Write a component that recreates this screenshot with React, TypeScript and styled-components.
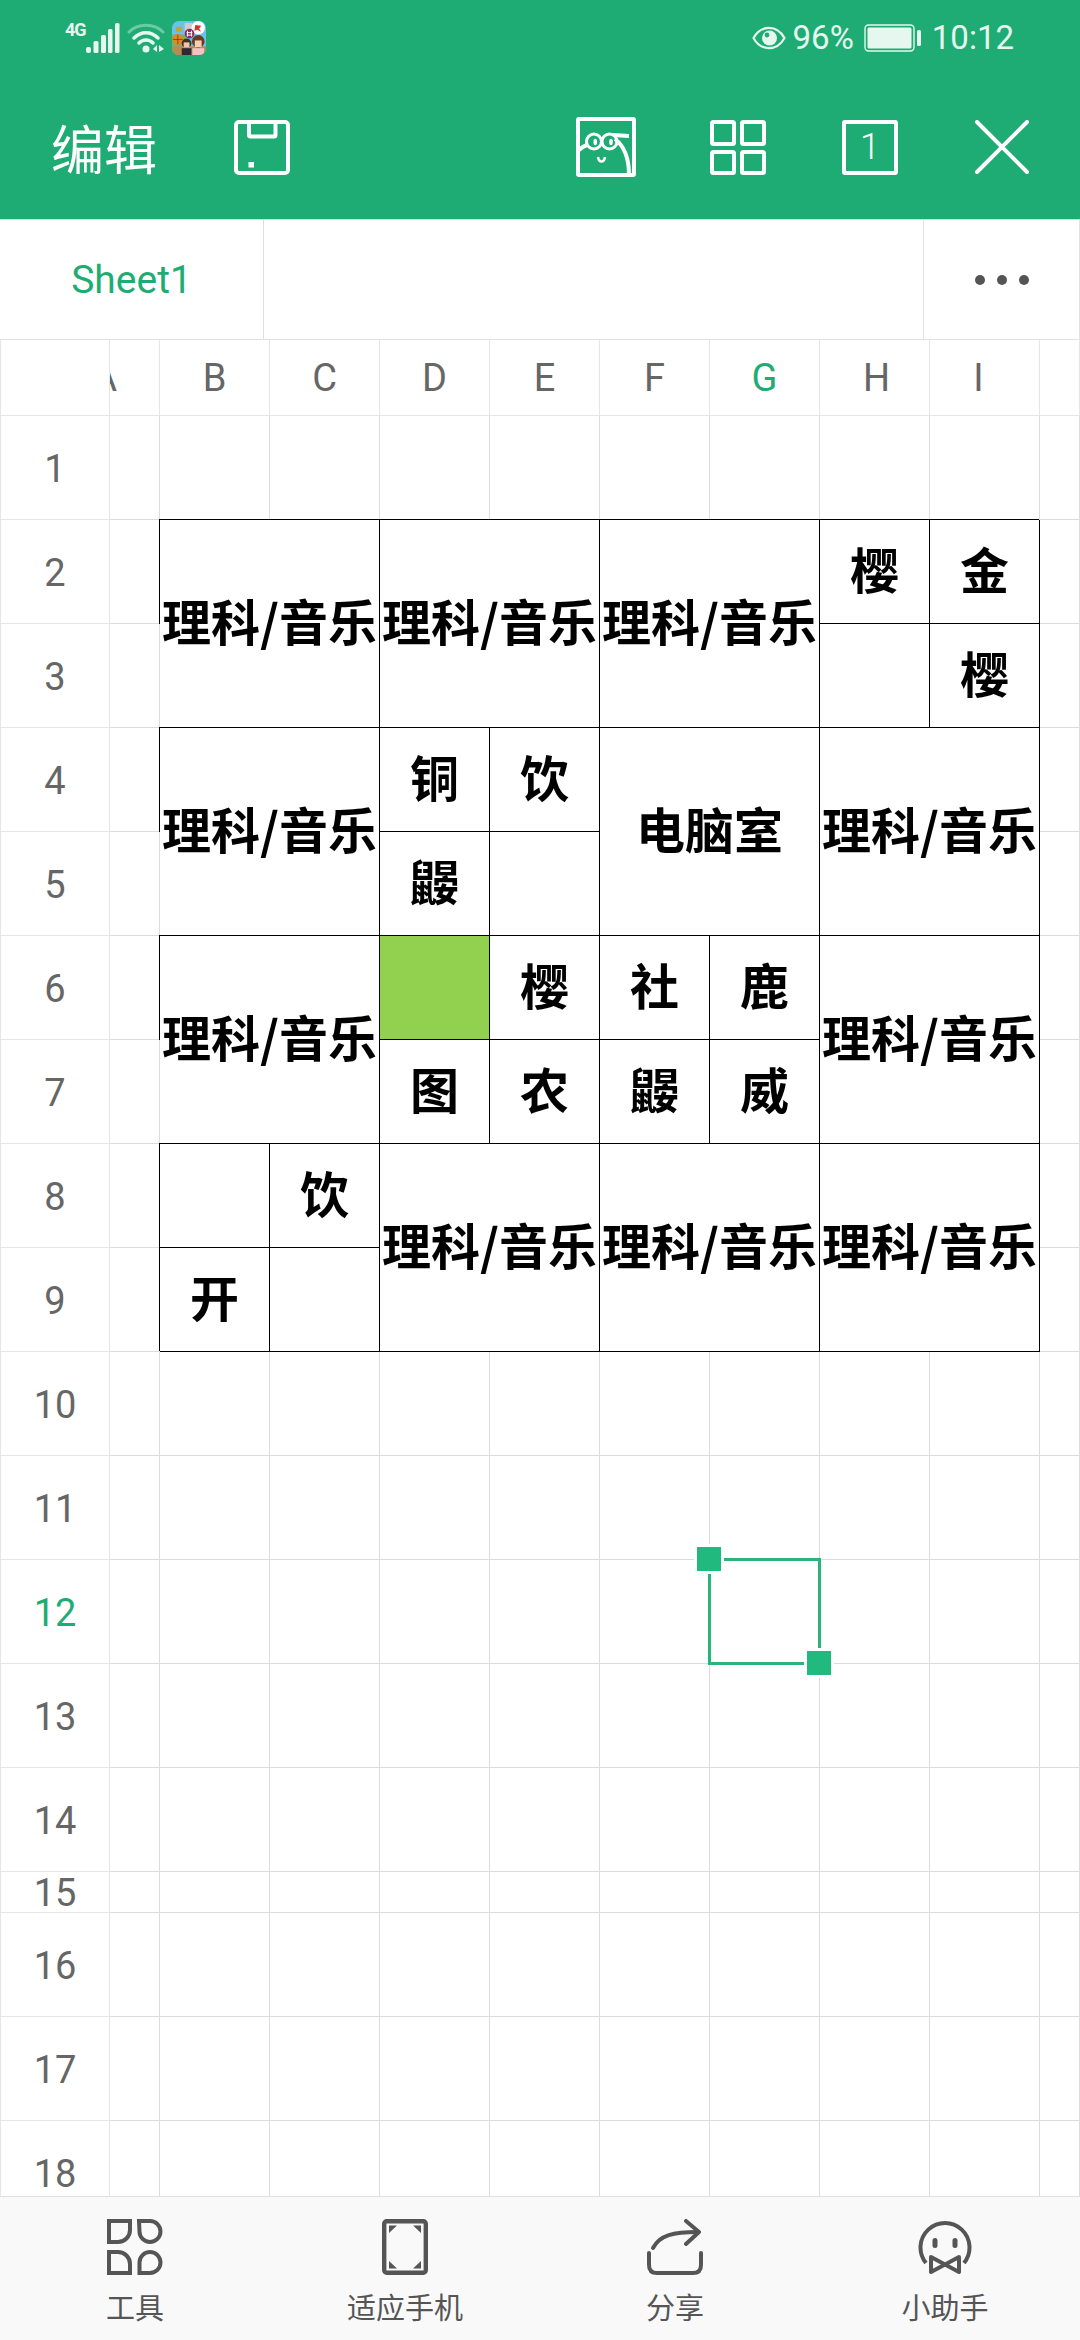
import React from "react";
import styled, { createGlobalStyle } from "styled-components";

const GREEN = "#1fac74";
const SANS = `Roboto, "Noto Sans CJK SC", sans-serif`;
const CJK = `"Noto Sans CJK SC", "Noto Sans", sans-serif`;

const COLS = ["A", "B", "C", "D", "E", "F", "G", "H", "I", ""];
const ROW_COUNT = 18;
const SUBJECT = "理科/音乐";

type Merged = { col: number; row: number; cs?: number; rs?: number; text?: string; fill?: boolean };

// col 1 = A, row 1 = first sheet row
const TABLE: Merged[] = [
  { col: 2, row: 2, cs: 2, rs: 2, text: SUBJECT },
  { col: 4, row: 2, cs: 2, rs: 2, text: SUBJECT },
  { col: 6, row: 2, cs: 2, rs: 2, text: SUBJECT },
  { col: 8, row: 2, text: "樱" },
  { col: 9, row: 2, text: "金" },
  { col: 8, row: 3 },
  { col: 9, row: 3, text: "樱" },
  { col: 2, row: 4, cs: 2, rs: 2, text: SUBJECT },
  { col: 4, row: 4, text: "铜" },
  { col: 5, row: 4, text: "饮" },
  { col: 6, row: 4, cs: 2, rs: 2, text: "电脑室" },
  { col: 8, row: 4, cs: 2, rs: 2, text: SUBJECT },
  { col: 4, row: 5, text: "鼹" },
  { col: 5, row: 5 },
  { col: 2, row: 6, cs: 2, rs: 2, text: SUBJECT },
  { col: 4, row: 6, fill: true },
  { col: 5, row: 6, text: "樱" },
  { col: 6, row: 6, text: "社" },
  { col: 7, row: 6, text: "鹿" },
  { col: 8, row: 6, cs: 2, rs: 2, text: SUBJECT },
  { col: 4, row: 7, text: "图" },
  { col: 5, row: 7, text: "农" },
  { col: 6, row: 7, text: "鼹" },
  { col: 7, row: 7, text: "威" },
  { col: 2, row: 8 },
  { col: 3, row: 8, text: "饮" },
  { col: 4, row: 8, cs: 2, rs: 2, text: SUBJECT },
  { col: 6, row: 8, cs: 2, rs: 2, text: SUBJECT },
  { col: 8, row: 8, cs: 2, rs: 2, text: SUBJECT },
  { col: 2, row: 9, text: "开" },
  { col: 3, row: 9 },
];

function findStart(col: number, row: number) {
  return TABLE.find((t) => t.col === col && t.row === row);
}

function isCovered(col: number, row: number) {
  return TABLE.some(
    (t) => col >= t.col && col < t.col + (t.cs ?? 1) && row >= t.row && row < t.row + (t.rs ?? 1)
  );
}

const SignalIcon = () => (
  <svg width="35" height="30" viewBox="0 0 35 30" fill="currentColor">
    <rect x="1" y="24" width="5" height="6" rx="2" />
    <rect x="8.5" y="18" width="5" height="12" rx="1.5" />
    <rect x="16" y="12" width="5" height="18" rx="1.5" />
    <rect x="23" y="6" width="4.5" height="24" rx="1.5" />
    <rect x="30" y="0" width="4.5" height="30" rx="1.5" />
  </svg>
);

const WifiIcon = () => (
  <svg width="38" height="30" viewBox="0 0 38 30" fill="none" stroke="currentColor" strokeLinecap="round">
    <path d="M2 9 C11 0 27 0 36 9" strokeWidth="3" opacity="0.4" />
    <path d="M7 15 C14 8 24 8 31 15" strokeWidth="3.5" />
    <path d="M12 20 C16 16 22 16 26 20" strokeWidth="3.5" />
    <circle cx="19" cy="26" r="3.5" fill="currentColor" stroke="none" />
    <path d="M30 22 V29 L26 26 Z M32 22 V29 L37 26 Z" fill="currentColor" stroke="none" />
  </svg>
);

const GameIcon = () => (
  <svg width="34" height="34" viewBox="0 0 35 35">
    <clipPath id="game-clip">
      <rect width="35" height="35" rx="7" />
    </clipPath>
    <g clipPath="url(#game-clip)">
      <rect width="35" height="35" fill="#6cc0ea" />
      <rect y="14" width="14" height="12" fill="#6db56a" />
      <rect y="26" width="35" height="9" fill="#b98a52" />
      <rect x="13" y="2" width="8" height="12" fill="#c9ced0" />
      <rect x="4" y="6" width="6" height="5" fill="#b9a83a" />
      <circle cx="27" cy="7" r="7" fill="#fff" />
      <path d="M24 4 L30 5 L28 8 L30 11 L26 9 L23 10 Z" fill="#d8322a" />
      <circle cx="6" cy="19" r="6" fill="#d98a2b" />
      <path d="M1 19 H11 M6 14 V24" stroke="#8a4b12" strokeWidth="1" />
      <circle cx="18" cy="13" r="5" fill="#8f2a55" />
      <path d="M16 10 V16 M20 10 V16 M15 12 H21 M15 14.5 H21" stroke="#fff" strokeWidth="1" />
      <rect x="10" y="28" width="10" height="7" fill="#2b2b33" />
      <circle cx="15" cy="23" r="5" fill="#4b2a22" />
      <rect x="12" y="22" width="6" height="5.500" fill="#f3c6a2" />
      <rect x="21" y="28" width="12" height="7" fill="#f6c0c4" />
      <circle cx="27" cy="21" r="6.500" fill="#6b3a22" />
      <rect x="23.500" y="20" width="7" height="7" fill="#f7cfae" />
    </g>
  </svg>
);

const EyeIcon = () => (
  <svg width="34" height="26" viewBox="0 0 34 26" fill="none" stroke="currentColor">
    <path d="M1.5 13 C9 -0.5 25 -0.5 32.5 13 C25 26.5 9 26.5 1.5 13 Z" strokeWidth="2.2" />
    <circle cx="17.5" cy="13" r="7.5" fill="currentColor" stroke="none" />
    <circle cx="15" cy="10" r="2.4" fill={GREEN} stroke="none" />
  </svg>
);

const BatteryIcon = () => (
  <svg width="57" height="28" viewBox="0 0 57 28" fill="currentColor">
    <rect x="1" y="1" width="49" height="26" rx="3.5" fill="none" stroke="currentColor" strokeWidth="1.4" />
    <rect x="3.5" y="3.5" width="44" height="21" rx="1.5" />
    <rect x="53" y="6" width="4" height="16" rx="1.5" />
  </svg>
);

const SaveIcon = () => (
  <svg width="56" height="55" viewBox="0 0 56 55" fill="none" stroke="currentColor" strokeWidth="4">
    <rect x="2" y="2" width="52" height="51" rx="3" />
    <path d="M15 2 V15 A1.500 1.500 0 0 0 16.500 16.500 H40 A1.500 1.500 0 0 0 41.500 15 V2" />
    <rect x="14.500" y="42" width="5.500" height="5.500" fill="currentColor" stroke="none" />
  </svg>
);

const OwlIcon = () => (
  <svg width="60" height="60" viewBox="0 0 60 60" fill="none" stroke="currentColor" strokeWidth="3.500">
    <rect x="2" y="2" width="56" height="56" rx="1" strokeWidth="4" />
    <path d="M3 33 C6 30 8 29 11 28" strokeWidth="4" />
    <circle cx="18" cy="24.500" r="7.500" strokeWidth="3" />
    <circle cx="33.500" cy="24.500" r="7.500" strokeWidth="3" />
    <ellipse cx="19.300" cy="25" rx="1.800" ry="3.200" fill="currentColor" stroke="none" />
    <ellipse cx="35" cy="25" rx="1.800" ry="3.200" fill="currentColor" stroke="none" />
    <path d="M22 40 C23 46 28 46 29 40" strokeWidth="2.500" />
    <path d="M37 18 L53 19 M39 22 C48 29 53 42 53 58" strokeWidth="4" />
  </svg>
);

const GridIcon = () => (
  <svg width="56" height="55" viewBox="0 0 56 55" fill="none" stroke="currentColor" strokeWidth="4">
    <rect x="2" y="2" width="22" height="22" rx="1.500" />
    <rect x="32" y="2" width="22" height="22" rx="1.500" />
    <rect x="2" y="32" width="22" height="21" rx="1.500" />
    <rect x="32" y="32" width="22" height="21" rx="1.500" />
  </svg>
);

const CloseIcon = () => (
  <svg width="54" height="54" viewBox="0 0 54 54" fill="none" stroke="currentColor" strokeWidth="4" strokeLinecap="round">
    <path d="M2 2 L52 52 M52 2 L2 52" />
  </svg>
);

const ToolsIcon = () => (
  <svg width="56" height="56" viewBox="0 0 56 56" fill="none" stroke="currentColor" strokeWidth="4">
    <path d="M2 2 H23 V11 A12 12 0 0 1 11 23 H2 Z" />
    <path d="M32 2 H43 A10.500 10.500 0 1 1 32.500 12.500 Z" />
    <path d="M2 33 H11 A12 12 0 0 1 23 45 V54 H2 Z" />
    <path d="M32.500 54 V43.500 A10.500 10.500 0 1 1 43 54 Z" />
  </svg>
);

const FitIcon = () => (
  <svg width="46" height="56" viewBox="0 0 46 56" fill="currentColor">
    <rect x="2.200" y="2.200" width="41.600" height="51.600" rx="2.500" fill="none" stroke="currentColor" strokeWidth="4.400" />
    <path d="M7 6.500 H15 L7 14 Z M39 6.500 H31 L39 14 Z M7 49.500 H15 L7 42 Z M39 49.500 H31 L39 42 Z" />
  </svg>
);

const ShareIcon = () => (
  <svg width="56" height="56" viewBox="0 0 56 56" fill="none" stroke="currentColor" strokeWidth="4" strokeLinecap="round" strokeLinejoin="round">
    <path d="M6 29 C13 16 26 13 51 13" />
    <path d="M39 2 L52 13 L39 25" />
    <path d="M2 34 V46 Q2 54 10 54 H46 Q54 54 54 46 V34" />
  </svg>
);

const BotIcon = () => (
  <svg width="54" height="56" viewBox="0 0 54 56" fill="none" stroke="currentColor" strokeWidth="4">
    <path d="M8 44 A24.500 24.500 0 1 1 46 44" />
    <rect x="14.500" y="19" width="5" height="10" rx="2.500" fill="currentColor" stroke="none" />
    <rect x="34.500" y="19" width="5" height="10" rx="2.500" fill="currentColor" stroke="none" />
    <path d="M13 38 L41 53 V38 L13 53 Z" strokeLinejoin="round" />
  </svg>
);

const TOOLS = [
  { label: "工具", icon: <ToolsIcon /> },
  { label: "适应手机", icon: <FitIcon /> },
  { label: "分享", icon: <ShareIcon /> },
  { label: "小助手", icon: <BotIcon /> },
];

export default function App() {
  const cells: React.ReactNode[] = [];
  for (let row = 1; row <= ROW_COUNT; row++) {
    cells.push(
      <RowHead key={`r${row}`} $row={row + 1} $active={row === 12}>
        {row}
      </RowHead>
    );
    for (let col = 1; col <= COLS.length; col++) {
      const start = findStart(col, row);
      if (start) {
        cells.push(
          <TableCell
            key={`${col}-${row}`}
            $col={col + 1}
            $row={row + 1}
            $cs={start.cs ?? 1}
            $rs={start.rs ?? 1}
            $fill={!!start.fill}
          >
            {start.text}
          </TableCell>
        );
      } else if (!isCovered(col, row)) {
        cells.push(<PlainCell key={`${col}-${row}`} $col={col + 1} $row={row + 1} />);
      }
    }
  }

  return (
    <Page>
      <GlobalStyle />
      <Header>
        <StatusBar>
          <StatusGroup>
            <NetLabel>4G</NetLabel>
            <SignalIcon />
            <WifiIcon />
            <GameIcon />
          </StatusGroup>
          <StatusGroup>
            <EyeIcon />
            <StatusText>96%</StatusText>
            <BatteryIcon />
            <Clock>10:12</Clock>
          </StatusGroup>
        </StatusBar>
        <ActionBar>
          <ActionLeft>
            <Title>编辑</Title>
            <ActionButton>
              <SaveIcon />
            </ActionButton>
          </ActionLeft>
          <ActionRight>
            <ActionButton>
              <OwlIcon />
            </ActionButton>
            <ActionButton>
              <GridIcon />
            </ActionButton>
            <ActionButton>
              <SheetCount>1</SheetCount>
            </ActionButton>
            <ActionButton>
              <CloseIcon />
            </ActionButton>
          </ActionRight>
        </ActionBar>
      </Header>

      <TabBar>
        <Tab>Sheet1</Tab>
        <TabSpacer />
        <MoreButton>
          <Dot />
          <Dot />
          <Dot />
        </MoreButton>
      </TabBar>

      <Sheet>
        <SheetGrid>
          <Corner />
          {COLS.map((c, i) =>
            c === "A" ? (
              <ClippedHead key="A" $col={i + 2}>
                {c}
              </ClippedHead>
            ) : (
              <ColHead key={`col${i}`} $col={i + 2} $active={c === "G"} $nudge={c === "I" ? -6 : c === "H" ? 2 : 0}>
                {c}
              </ColHead>
            )
          )}
          {cells}
          <Selection>
            <TopHandle />
            <BottomHandle />
          </Selection>
        </SheetGrid>
      </Sheet>

      <Toolbar>
        {TOOLS.map((t) => (
          <ToolItem key={t.label}>
            <ToolIcon>{t.icon}</ToolIcon>
            <ToolLabel>{t.label}</ToolLabel>
          </ToolItem>
        ))}
      </Toolbar>
    </Page>
  );
}

const GlobalStyle = createGlobalStyle`
  html, body {
    margin: 0;
    padding: 0;
    background: #fff;
    overflow: hidden;
  }
  *, *::before, *::after {
    box-sizing: border-box;
  }
`;

const Page = styled.div`
  width: 1080px;
  height: 2340px;
  display: flex;
  flex-direction: column;
  font-family: ${SANS};
  overflow: hidden;
`;

const Header = styled.header`
  flex: none;
  height: 220px;
  background: ${GREEN};
  border-bottom: 1px solid #bfe8d8;
  display: flex;
  flex-direction: column;
`;

const StatusBar = styled.div`
  height: 75px;
  padding: 0 66px 0 65px;
  display: flex;
  align-items: center;
  justify-content: space-between;
  color: #e6f7f0;
`;

const StatusGroup = styled.div`
  display: flex;
  align-items: center;
  gap: 7px;
`;

const NetLabel = styled.span`
  font: 700 18px/18px ${SANS};
  letter-spacing: -1px;
  margin-right: -8px;
  margin-bottom: 16px;
`;

const StatusText = styled.span`
  font: 400 33px/40px ${SANS};
  margin-right: 3px;
`;

const Clock = styled(StatusText)`
  margin: 0 0 0 4px;
`;

const ActionBar = styled.div`
  flex: 1;
  display: flex;
  align-items: center;
  justify-content: space-between;
  color: #fff;
  padding: 0 12px 0 51px;
`;

const ActionLeft = styled.div`
  display: flex;
  align-items: center;
  gap: 40px;
`;

const ActionRight = styled.div`
  display: flex;
  align-items: center;
`;

const Title = styled.div`
  width: 105px;
  font: 400 53px/60px ${CJK};
  white-space: nowrap;
`;

const ActionButton = styled.div`
  width: 132px;
  display: flex;
  align-items: center;
  justify-content: center;
`;

const SheetCount = styled.div`
  width: 56px;
  height: 55px;
  border: 4px solid #fff;
  border-radius: 3px;
  display: flex;
  align-items: center;
  justify-content: center;
  font: 300 36px/36px ${SANS};
`;

const TabBar = styled.div`
  flex: none;
  height: 120px;
  display: flex;
  background: #fff;
  border-bottom: 1px solid #e2e2e2;
`;

const Tab = styled.div`
  width: 264px;
  border-right: 1px solid #dedede;
  display: flex;
  align-items: center;
  justify-content: center;
  color: ${GREEN};
  font: 400 39px/44px ${SANS};
`;

const TabSpacer = styled.div`
  flex: 1;
`;

const MoreButton = styled.div`
  width: 157px;
  border-left: 1px solid #e2e2e2;
  border-right: 1px solid #e2e2e2;
  display: flex;
  align-items: center;
  justify-content: center;
  gap: 12px;
`;

const Dot = styled.span`
  width: 10px;
  height: 10px;
  border-radius: 50%;
  background: #555;
`;

const Sheet = styled.div`
  flex: 1;
  min-height: 0;
  overflow: hidden;
  background: #fff;
`;

const SheetGrid = styled.div`
  display: grid;
  grid-template-columns: 110px 50px repeat(8, 110px) 40px;
  grid-template-rows: 76px repeat(14, 104px) 41px repeat(3, 104px);
`;

const headLine = "#e6e6e6";
const gridLine = "#dcdcdc";

const Corner = styled.div`
  grid-column: 1;
  grid-row: 1;
  border-left: 1px solid ${headLine};
  border-right: 1px solid ${headLine};
  border-bottom: 1px solid ${headLine};
`;

const ColHead = styled.div<{ $col: number; $active?: boolean; $nudge?: number }>`
  grid-column: ${(p) => p.$col};
  grid-row: 1;
  border-right: 1px solid ${headLine};
  border-bottom: 1px solid ${headLine};
  display: flex;
  align-items: center;
  justify-content: center;
  font: 400 38px/44px ${SANS};
  color: ${(p) => (p.$active ? GREEN : "#666")};
  padding-left: ${(p) => Math.max(p.$nudge ?? 0, 0) * 2}px;
  padding-right: ${(p) => Math.max(-(p.$nudge ?? 0), 0) * 2}px;
`;

const ClippedHead = styled(ColHead)`
  justify-content: flex-end;
  padding-right: 42px;
  overflow: hidden;
`;

const RowHead = styled.div<{ $row: number; $active?: boolean }>`
  grid-column: 1;
  grid-row: ${(p) => p.$row};
  border-left: 1px solid ${headLine};
  border-right: 1px solid ${headLine};
  border-bottom: 1px solid ${headLine};
  padding-top: 2px;
  display: flex;
  align-items: center;
  justify-content: center;
  font: 400 38px/40px ${SANS};
  color: ${(p) => (p.$active ? GREEN : "#666")};
`;

const PlainCell = styled.div<{ $col: number; $row: number }>`
  grid-column: ${(p) => p.$col};
  grid-row: ${(p) => p.$row};
  border-right: 1px solid ${gridLine};
  border-bottom: 1px solid ${gridLine};
`;

const TableCell = styled.div<{ $col: number; $row: number; $cs: number; $rs: number; $fill: boolean }>`
  grid-column: ${(p) => p.$col} / span ${(p) => p.$cs};
  grid-row: ${(p) => p.$row} / span ${(p) => p.$rs};
  border-right: 1px solid #000;
  border-bottom: 1px solid #000;
  box-shadow: -1px -1px 0 #000;
  background: ${(p) => (p.$fill ? "#92d050" : "#fff")};
  padding-bottom: 8px;
  display: flex;
  align-items: center;
  justify-content: center;
  white-space: nowrap;
  color: #000;
  font: 700 49px/58px ${CJK};
`;

const Selection = styled.div`
  grid-column: 8;
  grid-row: 13;
  position: relative;
  z-index: 2;
  margin: -2px -1px -1px -2px;
  border: 3px solid #2ab37b;
`;

const Handle = styled.span`
  position: absolute;
  width: 30px;
  height: 30px;
  background: #21b97d;
  border: 3px solid #fff;
`;

const TopHandle = styled(Handle)`
  left: -17px;
  top: -17px;
`;

const BottomHandle = styled(Handle)`
  right: -16px;
  bottom: -16px;
`;

const Toolbar = styled.nav`
  flex: none;
  height: 144px;
  display: grid;
  grid-template-columns: repeat(4, 270px);
  background: #f9f9f9;
  border-top: 1px solid #e0e0e0;
`;

const ToolItem = styled.div`
  display: flex;
  flex-direction: column;
  align-items: center;
  padding-top: 22px;
  color: #555;
`;

const ToolIcon = styled.div`
  height: 56px;
  display: flex;
  align-items: center;
`;

const ToolLabel = styled.div`
  margin-top: 13px;
  font: 400 29px/36px ${CJK};
`;
